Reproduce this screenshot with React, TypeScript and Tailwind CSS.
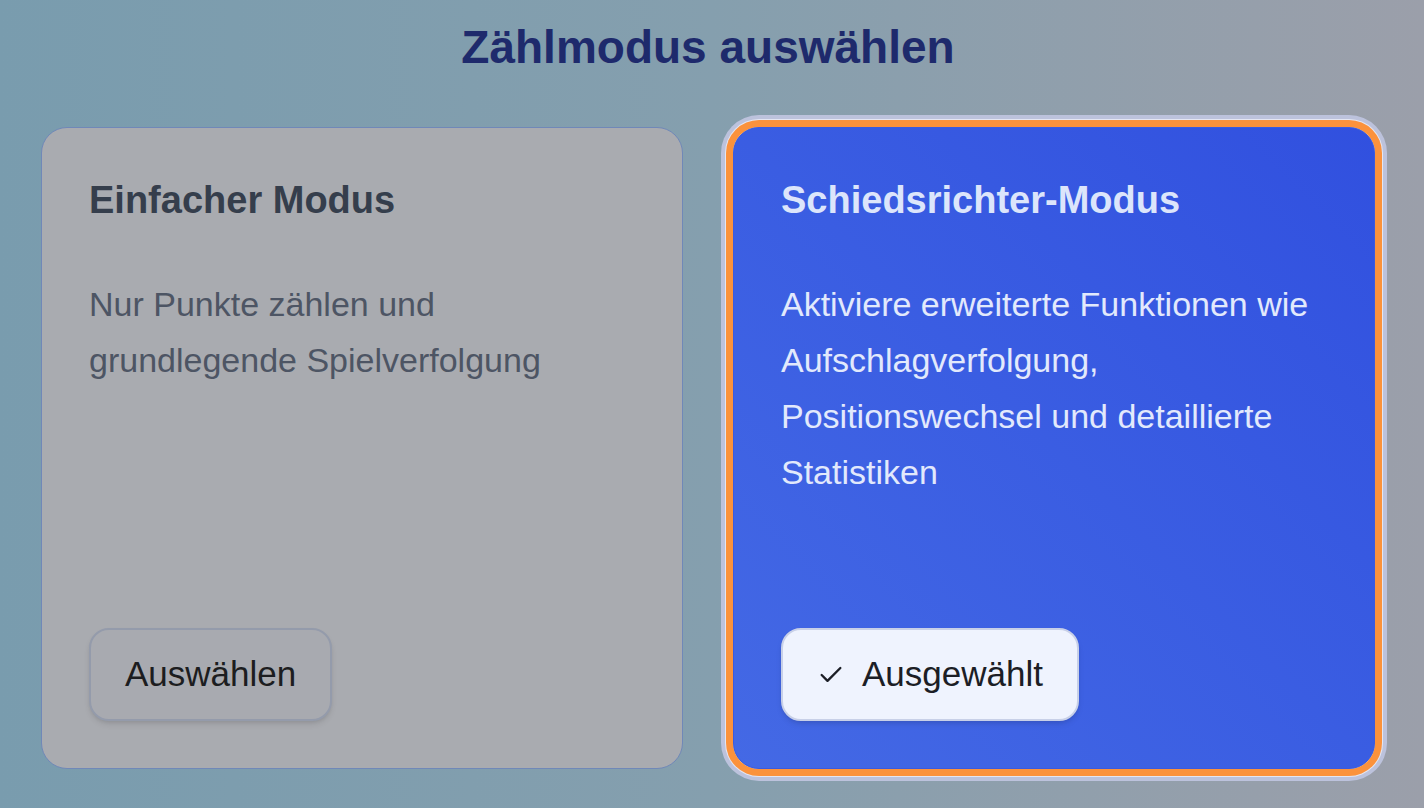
import { Check } from "lucide-react";

type ModeCardProps = {
  title: string;
  description: string;
  selected: boolean;
};

function ModeCard({ title, description, selected }: ModeCardProps) {
  return (
    <div
      className={`
        flex
        h-[642px]
        w-[642px]
        flex-col
        rounded-[26px]
        border
        p-[47px]
        ${
          selected
            ? "border-[#3a5be0] bg-gradient-to-bl from-[#3150df] to-[#4469e5] shadow-[0_0_0_7px_#fb923c,0_0_0_8px_#e4e6f2,0_0_0_12px_#bcc2dc]"
            : "border-[#7088b8] bg-[#a9abb0]"
        }
      `}
    >
      <h2
        className={`text-[38px] font-bold leading-[50px] ${
          selected ? "text-[#dce5fb]" : "text-[#353e4c]"
        }`}
      >
        {title}
      </h2>

      <p
        className={`mt-[51px] text-[34px] leading-[56px] ${
          selected ? "text-[#e2e9fc]" : "text-[#4d5564]"
        }`}
      >
        {description}
      </p>

      <div className="mt-auto">
        {selected ? (
          <button
            type="button"
            className="flex h-[93px] items-center gap-[17px] rounded-[20px] border-2 border-[#c8d0e8] bg-[#eff3fe] pl-[34px] pr-[34px] text-[35px] text-[#1c1e26] shadow-md"
          >
            <Check size={28} strokeWidth={2} />
            <span>Ausgewählt</span>
          </button>
        ) : (
          <button
            type="button"
            className="flex h-[93px] items-center rounded-[20px] border-2 border-[#949bab] bg-[#a8aab0] px-[34px] text-[35px] text-[#1c1d20] shadow-md"
          >
            Auswählen
          </button>
        )}
      </div>
    </div>
  );
}

export default function App() {
  return (
    <div
      className="min-h-[808px] w-full bg-gradient-to-r from-[#799cae] via-[#859fae] to-[#9b9faa]"
      style={{ fontFamily: '"Liberation Sans", Arial, sans-serif' }}
    >
      <div className="ml-[41px] flex w-[1334px] flex-col pt-[20px]">
        <h1 className="text-center text-[46px] font-bold leading-[55px] text-[#1e2a6c]">
          Zählmodus auswählen
        </h1>

        <div className="mt-[52px] flex gap-[50px]">
          <ModeCard
            title="Einfacher Modus"
            description="Nur Punkte zählen und grundlegende Spielverfolgung"
            selected={false}
          />
          <ModeCard
            title="Schiedsrichter-Modus"
            description="Aktiviere erweiterte Funktionen wie Aufschlagverfolgung, Positionswechsel und detaillierte Statistiken"
            selected
          />
        </div>
      </div>
    </div>
  );
}
